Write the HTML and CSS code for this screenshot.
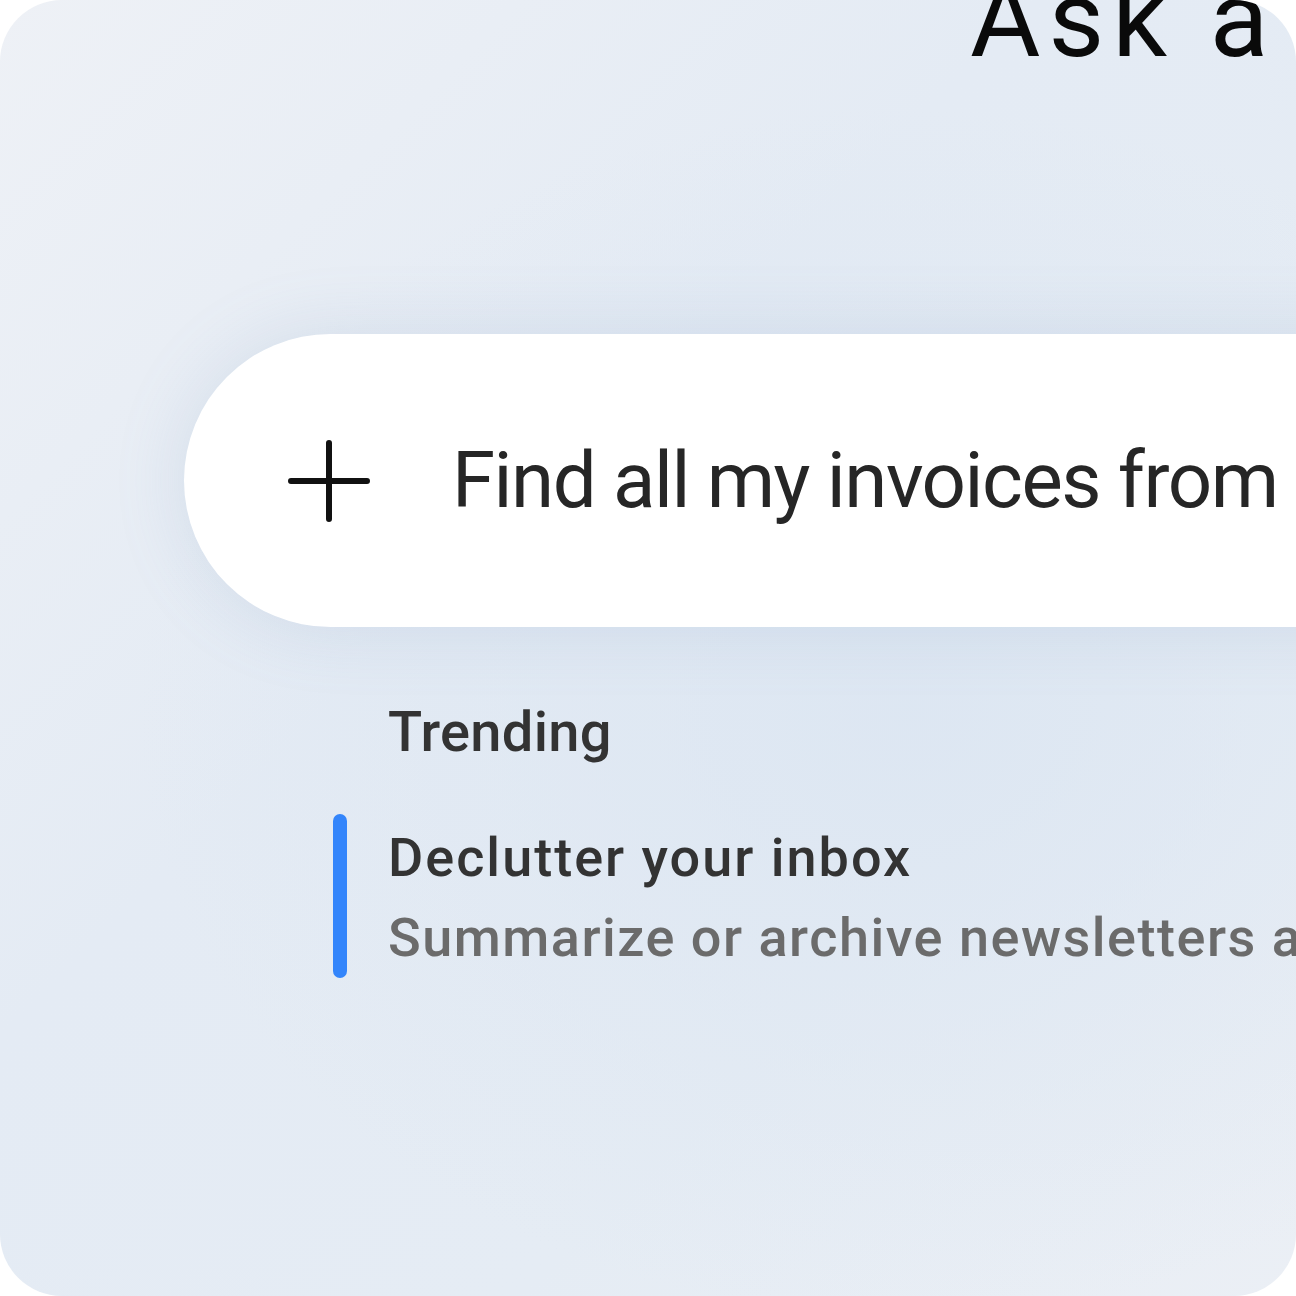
FILE: index.html
```html
<!DOCTYPE html>
<html>
<head>
<meta charset="utf-8">
<link rel="stylesheet" href="styles.css">
</head>
<body>
<div class="card">
  <h1 class="headline">Ask a</h1>
  <div class="search">
    <svg class="plus" viewBox="0 0 82 82" width="82" height="82" aria-hidden="true">
      <path d="M41 3 V79 M3 41 H79" stroke="#111" stroke-width="6" stroke-linecap="round" fill="none"/>
    </svg>
    <span class="query">Find all my invoices from</span>
  </div>
  <div class="trending">
    <div class="trending-title">Trending</div>
    <div class="item">
      <div class="bar"></div>
      <div class="item-text">
        <div class="item-title">Declutter your inbox</div>
        <div class="item-sub">Summarize or archive newsletters and promotions</div>
      </div>
    </div>
  </div>
</div>
</body>
</html>
```
FILE: styles.css
```css
html, body {
  margin: 0;
  padding: 0;
  background: #ffffff;
}
.card {
  width: 1296px;
  height: 1296px;
  border-radius: 62px;
  overflow: hidden;
  background:
    radial-gradient(ellipse at 70% 55%, rgba(220,230,242,0.9) 0%, rgba(226,234,244,0) 60%),
    linear-gradient(135deg, #eef1f6 0%, #e4ebf4 40%, #e5ecf4 70%, #ebeff5 100%);
  display: flex;
  flex-direction: column;
  font-family: Roboto, "Noto Sans", sans-serif;
}
.headline {
  margin: -31px 0 0 0;
  padding-left: 970px;
  font-weight: 400;
  font-size: 108px;
  line-height: 100px;
  color: #0a0a0a;
  white-space: nowrap;
  letter-spacing: 8px;
}
.search {
  margin: 265px 0 0 184px;
  height: 293px;
  width: 1400px;
  flex-shrink: 0;
  background: #ffffff;
  border-radius: 147px 0 0 147px;
  box-shadow: 0 0 70px rgba(120, 150, 190, 0.18);
  display: flex;
  align-items: center;
  white-space: nowrap;
}
.plus {
  margin-left: 104px;
  flex-shrink: 0;
}
.query {
  margin-left: 82px;
  font-size: 78px;
  letter-spacing: -1.5px;
  color: #262626;
  font-weight: 400;
}
.trending {
  margin-top: 73px;
  white-space: nowrap;
}
.trending-title {
  padding-left: 388px;
  font-size: 56px;
  line-height: 64px;
  font-weight: 500;
  letter-spacing: 0.3px;
  color: #333333;
}
.item {
  margin: 50px 0 0 333px;
  display: flex;
}
.bar {
  width: 14px;
  border-radius: 7px;
  background: #3385fb;
  flex-shrink: 0;
}
.item-text {
  margin-left: 41px;
  padding-top: 4px;
}
.item-title {
  font-size: 54px;
  line-height: 80px;
  font-weight: 500;
  letter-spacing: 2px;
  color: #333333;
}
.item-sub {
  font-size: 54px;
  line-height: 80px;
  font-weight: 500;
  letter-spacing: 1.5px;
  color: #6b6b6b;
}
```
